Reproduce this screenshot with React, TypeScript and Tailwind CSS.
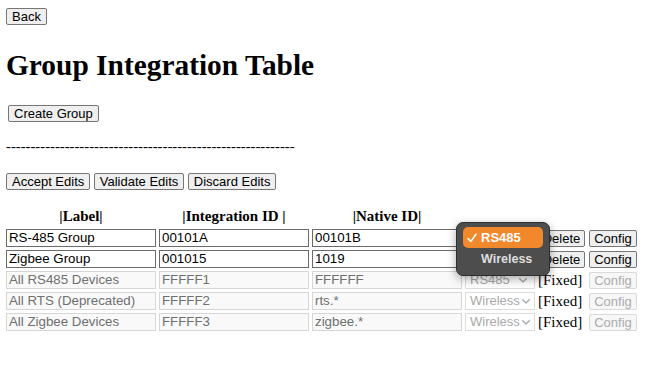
import React from "react";

const btn =
  "h-[17px] px-[5px] border border-[#767676] bg-[#efefef] rounded-[2px] text-[13px] leading-[15px] text-black font-['Liberation_Sans',Arial,sans-serif] flex items-center justify-center whitespace-nowrap";
const btnDisabled =
  "h-[17px] px-[5px] border border-[#d9d9d9] bg-[#f7f7f7] rounded-[2px] text-[13px] leading-[15px] text-[#ababab] font-['Liberation_Sans',Arial,sans-serif] flex items-center justify-center whitespace-nowrap";

type Row = {
  label: string;
  iid: string;
  nid: string;
  type: string;
  fixed: boolean;
};

const rows: Row[] = [
  { label: "RS-485 Group", iid: "00101A", nid: "00101B", type: "RS485", fixed: false },
  { label: "Zigbee Group", iid: "001015", nid: "1019", type: "Wireless", fixed: false },
  { label: "All RS485 Devices", iid: "FFFFF1", nid: "FFFFFF", type: "RS485", fixed: true },
  { label: "All RTS (Deprecated)", iid: "FFFFF2", nid: "rts.*", type: "Wireless", fixed: true },
  { label: "All Zigbee Devices", iid: "FFFFF3", nid: "zigbee.*", type: "Wireless", fixed: true },
];

function Cell({ value, fixed }: { value: string; fixed: boolean }) {
  return (
    <div
      className={
        fixed
          ? "w-[150px] h-[18px] border border-[#d6d6d6] bg-[#f9f9f9] pl-[2px] flex items-center text-[13.3px] text-[#6f6f6f] font-['Liberation_Sans',Arial,sans-serif] whitespace-nowrap overflow-hidden"
          : "w-[150px] h-[18px] border border-[#6b6b6b] bg-white pl-[2px] flex items-center text-[13.3px] text-black font-['Liberation_Sans',Arial,sans-serif] whitespace-nowrap overflow-hidden"
      }
    >
      {value}
    </div>
  );
}

function Chevron() {
  return (
    <svg width="8" height="5" viewBox="0 0 8 5" className="shrink-0">
      <polyline points="0.7,0.7 4,4 7.3,0.7" fill="none" stroke="#a8a8a8" strokeWidth="1.3" strokeLinecap="round" strokeLinejoin="round" />
    </svg>
  );
}

function Select({ value }: { value: string }) {
  const wireless = value === "Wireless";
  return (
    <div
      className={
        wireless
          ? "w-[70px] h-[18px] border border-[#dcdcdc] bg-white pl-[4px] pr-[1px] flex items-center gap-[2px] text-[13px] text-[#a9a9a9] font-['Liberation_Sans',Arial,sans-serif] whitespace-nowrap overflow-hidden"
          : "w-[70px] h-[18px] border border-[#dcdcdc] bg-white pl-[4px] pr-[7px] flex items-center justify-between text-[13px] text-[#a9a9a9] font-['Liberation_Sans',Arial,sans-serif] whitespace-nowrap overflow-hidden"
      }
    >
      <span>{value}</span>
      <Chevron />
    </div>
  );
}

export default function App() {
  const dashes = "-".repeat(59);
  return (
    <div className="relative w-[670px] h-[366px] overflow-hidden bg-white text-black font-['Liberation_Serif','Times_New_Roman',serif] pl-[6px] pt-[8px]">
      <div className="flex">
        <button className={btn}>Back</button>
      </div>
      <h1 className="mt-[23px] h-[34px] text-[29.4px] leading-[34px] font-bold whitespace-nowrap">
        Group Integration Table
      </h1>
      <div className="mt-[23px] flex pl-[2px]">
        <button className={btn}>Create Group</button>
      </div>
      <div className="mt-[16px] h-[17px] text-[14.7px] leading-[17px] whitespace-nowrap">{dashes}</div>
      <div className="mt-[18px] flex gap-[3.5px]">
        <button className={btn}>Accept Edits</button>
        <button className={btn}>Validate Edits</button>
        <button className={btn}>Discard Edits</button>
      </div>

      <div className="mt-[18px] flex gap-[3px] h-[16px] text-[15px] leading-[16px] font-bold">
        <div className="w-[150px] text-center">|Label|</div>
        <div className="w-[150px] text-center">|Integration ID |</div>
        <div className="w-[150px] text-center">|Native ID|</div>
      </div>

      <div className="mt-[5px] flex flex-col gap-[3px]">
        {rows.map((r, i) => (
          <div key={i} className="flex items-center h-[18px]">
            <div className="flex gap-[3px]">
              <Cell value={r.label} fixed={r.fixed} />
              <Cell value={r.iid} fixed={r.fixed} />
              <Cell value={r.nid} fixed={r.fixed} />
            </div>
            <div className="ml-[3px]">
              <Select value={r.type} />
            </div>
            <div className="ml-[3px] w-[47px] flex">
              {r.fixed ? (
                <span className="text-[15px] leading-[18px] whitespace-nowrap">[Fixed]</span>
              ) : (
                <button className={btn + " w-[47px]"}>Delete</button>
              )}
            </div>
            <div className="ml-[4px] flex">
              <button className={(r.fixed ? btnDisabled : btn) + " w-[48px]"}>Config</button>
            </div>
          </div>
        ))}
      </div>

      {/* open select popup */}
      <div className="absolute left-[456px] top-[222px] w-[94px] h-[54px] rounded-[7px] bg-[#4d4d4d] border border-[#2e2e2e] shadow-[0_3px_10px_rgba(0,0,0,0.35)] px-[6px] pt-[4px] font-['Liberation_Sans',Arial,sans-serif]">
        <div className="h-[21px] rounded-[5px] bg-[#f2882c] flex items-center text-white text-[13px] font-bold">
          <svg width="10" height="10" viewBox="0 0 10 10" className="ml-[4px] mr-[4px]">
            <polyline points="1,5.5 3.8,8.5 9,1.2" fill="none" stroke="#ffffff" strokeWidth="1.6" strokeLinecap="round" strokeLinejoin="round" />
          </svg>
          <span>RS485</span>
        </div>
        <div className="h-[22px] flex items-center pl-[18px] text-[#dedede] text-[12.5px] font-bold">Wireless</div>
      </div>
    </div>
  );
}
